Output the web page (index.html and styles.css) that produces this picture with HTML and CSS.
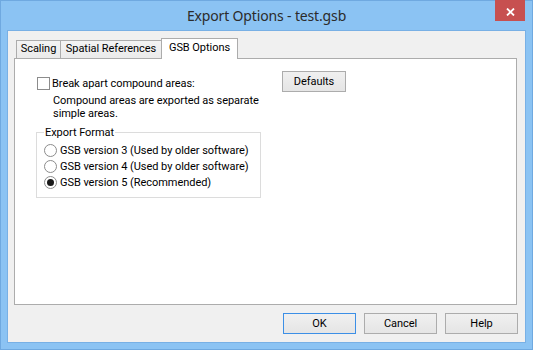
FILE: index.html
```html
<!DOCTYPE html>
<html lang="en">
<head>
<meta charset="UTF-8">
<title>Export Options - test.gsb</title>
<link rel="stylesheet" href="styles.css">
</head>
<body>
  <div class="window">
    <div class="titlebar">
      <span class="title">Export Options - test.gsb</span>
      <span class="close">
        <svg width="9" height="8" viewBox="0 0 9 8"><path d="M1 0.5 L8 7.5 M8 0.5 L1 7.5" stroke="#fff" stroke-width="1.8"/></svg>
      </span>
    </div>
    <div class="client">
      <div class="tabs">
        <div class="tab tab-scaling">Scaling</div>
        <div class="tab tab-spatial">Spatial References</div>
        <div class="tab tab-active">GSB Options</div>
      </div>
      <div class="panel">
        <div class="options">
          <div class="check-row">
            <span class="checkbox"></span>
            <span>Break apart compound areas:</span>
          </div>
          <p class="hint">Compound areas are exported as separate<br>simple areas.</p>
          <fieldset class="group">
            <legend>Export Format</legend>
            <div class="radio-row"><span class="radio"></span>GSB version 3 (Used by older software)</div>
            <div class="radio-row"><span class="radio"></span>GSB version 4 (Used by older software)</div>
            <div class="radio-row"><span class="radio checked"></span>GSB version 5 (Recommended)</div>
          </fieldset>
        </div>
        <button class="btn btn-defaults">Defaults</button>
      </div>
      <div class="buttons">
        <button class="btn btn-default">OK</button>
        <button class="btn">Cancel</button>
        <button class="btn">Help</button>
      </div>
    </div>
  </div>
</body>
</html>
```
FILE: styles.css
```css
* {
  box-sizing: border-box;
}
body {
  margin: 0;
  background: #fff;
  font-family: Roboto, "Noto Sans", sans-serif;
  font-size: 11px;
  letter-spacing: -0.05px;
  color: #000;
}
.window {
  width: 533px;
  height: 350px;
  display: flex;
  flex-direction: column;
  background: #8bc3f3;
  border: 1px solid #6fa9e0;
  padding: 0 6px 6px 6px;
}
.titlebar {
  height: 29px;
  display: flex;
  align-items: flex-start;
}
.title {
  flex: 1;
  text-align: center;
  padding-left: 31px;
  line-height: 29px;
  font-family: "Noto Sans", sans-serif;
  font-size: 14px;
  letter-spacing: -0.15px;
  color: #2b2b2b;
}
.close {
  width: 30px;
  height: 21px;
  margin-top: -1px;
  margin-right: 1px;
  background: #c75050;
  display: flex;
  align-items: center;
  justify-content: center;
  padding-top: 2px;
}
.client {
  flex: 1;
  display: flex;
  flex-direction: column;
  background: #f0f0f0;
  border: 1px solid #78b0e5;
  padding: 7px 8px 8px 6px;
}
.tabs {
  height: 20px;
  display: flex;
  align-items: flex-end;
  padding-left: 2px;
}
.tab {
  height: 18px;
  line-height: 16px;
  text-align: center;
  border: 1px solid #acacac;
  border-bottom: none;
  background: linear-gradient(#f3f3f3, #ebebeb);
}
.tab-scaling {
  width: 45px;
}
.tab-spatial {
  width: 102px;
  margin-left: -1px;
}
.tab-active {
  width: 77px;
  height: 21px;
  line-height: 18px;
  margin-left: -1px;
  margin-bottom: -1px;
  background: #fff;
  position: relative;
  z-index: 1;
}
.panel {
  flex: 1;
  display: flex;
  align-items: flex-start;
  gap: 21px;
  background: #fff;
  border: 1px solid #acacac;
  padding: 12px 0 0 21px;
}
.options {
  width: 225px;
}
.check-row {
  display: flex;
  align-items: center;
  gap: 2px;
  margin-top: 6px;
  height: 13px;
  line-height: 13px;
}
.checkbox {
  width: 13px;
  height: 13px;
  margin-left: 1px;
  border: 1px solid #8c8c8c;
  background: #fff;
}
.hint {
  margin: 4px 0 0 17px;
  line-height: 13px;
  white-space: nowrap;
}
.group {
  margin: 6px 0 0 0;
  padding: 3px 0 7px 7px;
  border: 1px solid #dcdcdc;
  min-width: 0;
}
.group legend {
  padding: 0 1px;
  line-height: 13px;
}
.radio-row {
  display: flex;
  align-items: center;
  gap: 3px;
  height: 16px;
}
.radio {
  width: 13px;
  height: 13px;
  border-radius: 50%;
  border: 1px solid #8c8c8c;
  background: #fff;
  display: flex;
  align-items: center;
  justify-content: center;
}
.radio.checked::after {
  content: "";
  width: 7px;
  height: 7px;
  border-radius: 50%;
  background: #1a1a1a;
}
.btn {
  width: 73px;
  height: 21px;
  padding: 0;
  font-family: Roboto, "Noto Sans", sans-serif;
  font-size: 11px;
  letter-spacing: -0.05px;
  color: #000;
  border: 1px solid #acacac;
  background: linear-gradient(#f0f0f0, #e5e5e5);
}
.btn-defaults {
  width: 64px;
}
.btn-default {
  border-color: #3c8fe6;
}
.buttons {
  display: flex;
  justify-content: flex-end;
  gap: 8px;
  margin-top: 8px;
  margin-right: -1px;
}
```
